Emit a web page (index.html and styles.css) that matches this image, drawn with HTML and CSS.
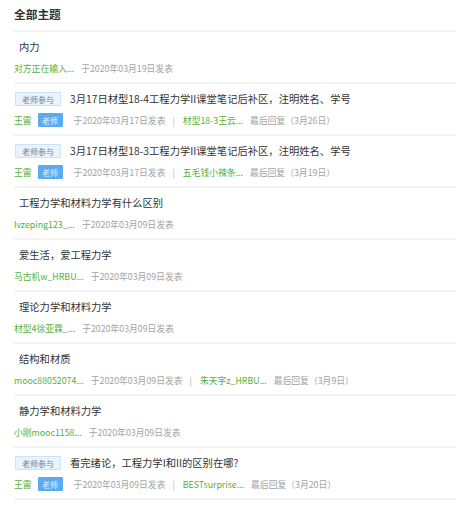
FILE: index.html
```html
<!DOCTYPE html>
<html lang="zh-CN">
<head>
<meta charset="utf-8">
<title>全部主题</title>
<link rel="stylesheet" href="styles.css">
</head>
<body>
<div class="board">
  <div class="board-head">全部主题</div>
  <ul class="topics">
    <li class="topic">
      <div class="topic-title"><span class="title-text">内力</span></div>
      <div class="topic-meta"><span class="user">对方正在输入...</span><span class="time">于2020年03月19日发表</span></div>
    </li>
    <li class="topic">
      <div class="topic-title"><span class="tag-teacher-in">老师参与</span><span class="title-text">3月17日材型18-4工程力学II课堂笔记后补区，注明姓名、学号</span></div>
      <div class="topic-meta"><span class="user">王雷</span><span class="tag-teacher">老师</span><span class="time time-wide">于2020年03月17日发表</span><span class="sep">|</span><span class="user">材型18-3王云...</span><span class="time">最后回复（3月26日）</span></div>
    </li>
    <li class="topic">
      <div class="topic-title"><span class="tag-teacher-in">老师参与</span><span class="title-text">3月17日材型18-3工程力学II课堂笔记后补区，注明姓名、学号</span></div>
      <div class="topic-meta"><span class="user">王雷</span><span class="tag-teacher">老师</span><span class="time time-wide">于2020年03月17日发表</span><span class="sep">|</span><span class="user">五毛钱小辣条...</span><span class="time">最后回复（3月19日）</span></div>
    </li>
    <li class="topic">
      <div class="topic-title"><span class="title-text">工程力学和材料力学有什么区别</span></div>
      <div class="topic-meta"><span class="user">lvzeping123_...</span><span class="time">于2020年03月09日发表</span></div>
    </li>
    <li class="topic">
      <div class="topic-title"><span class="title-text">爱生活，爱工程力学</span></div>
      <div class="topic-meta"><span class="user">马古机w_HRBU...</span><span class="time">于2020年03月09日发表</span></div>
    </li>
    <li class="topic">
      <div class="topic-title"><span class="title-text">理论力学和材料力学</span></div>
      <div class="topic-meta"><span class="user">材型4徐亚霖_...</span><span class="time">于2020年03月09日发表</span></div>
    </li>
    <li class="topic">
      <div class="topic-title"><span class="title-text">结构和材质</span></div>
      <div class="topic-meta"><span class="user">mooc88052074...</span><span class="time">于2020年03月09日发表</span><span class="sep">|</span><span class="user">朱天宇z_HRBU...</span><span class="time">最后回复（3月9日）</span></div>
    </li>
    <li class="topic">
      <div class="topic-title"><span class="title-text">静力学和材料力学</span></div>
      <div class="topic-meta"><span class="user">小刚mooc1158...</span><span class="time">于2020年03月09日发表</span></div>
    </li>
    <li class="topic">
      <div class="topic-title"><span class="tag-teacher-in">老师参与</span><span class="title-text">看完绪论，工程力学I和II的区别在哪?</span></div>
      <div class="topic-meta"><span class="user">王雷</span><span class="tag-teacher">老师</span><span class="time time-wide">于2020年03月09日发表</span><span class="sep">|</span><span class="user">BESTsurprise...</span><span class="time">最后回复（3月20日）</span></div>
    </li>
  </ul>
</div>
</body>
</html>
```

FILE: styles.css
```css
html, body {
  margin: 0;
  padding: 0;
  background: #ffffff;
}

body {
  font-family: "Microsoft YaHei", "Noto Sans CJK SC", "Noto Sans", sans-serif;
  color: #333333;
  overflow: hidden;
}

.board {
  padding-left: 14px;
}

.board-head {
  height: 30px;
  line-height: 28px;
  font-size: 11.7px;
  font-weight: bold;
  color: #333333;
  border-bottom: 2px solid #f3f3f3;
}

.topics {
  list-style: none;
  margin: 0;
  padding: 0;
}

.topic {
  height: 50px;
  padding-top: 7px;
  box-sizing: border-box;
  height: 52px;
  border-bottom: 2px solid #f3f3f3;
}

.topic-title {
  display: flex;
  align-items: center;
  height: 16px;
  padding-left: 1px;
}

.title-text {
  font-size: 10.3px;
  line-height: 16px;
  color: #333333;
  margin-left: 4px;
  white-space: nowrap;
}

.tag-teacher-in {
  box-sizing: border-box;
  height: 14px;
  width: 46px;
  display: flex;
  align-items: center;
  justify-content: center;
  font-size: 8px;
  color: #6d7f96;
  background: #eaf4fe;
  border: 1px solid #c9e1fa;
  border-radius: 1px;
  margin-right: 5px;
}

.topic-meta {
  display: flex;
  align-items: center;
  height: 16px;
  margin-top: 5px;
  font-size: 8.8px;
  white-space: nowrap;
}

.user {
  color: #55b03a;
  margin-right: 7px;
}

.time {
  color: #a3a3a3;
  margin-right: 7px;
}

.time-wide {
  margin-left: 4px;
}

.sep {
  color: #b5b5b5;
  margin-right: 8px;
}

.tag-teacher {
  box-sizing: border-box;
  height: 14px;
  width: 25px;
  display: flex;
  align-items: center;
  justify-content: center;
  font-size: 8px;
  color: #e3f1ff;
  background: #5cabef;
  border-radius: 1px;
  margin-left: -1px;
  margin-right: 7px;
}
```
